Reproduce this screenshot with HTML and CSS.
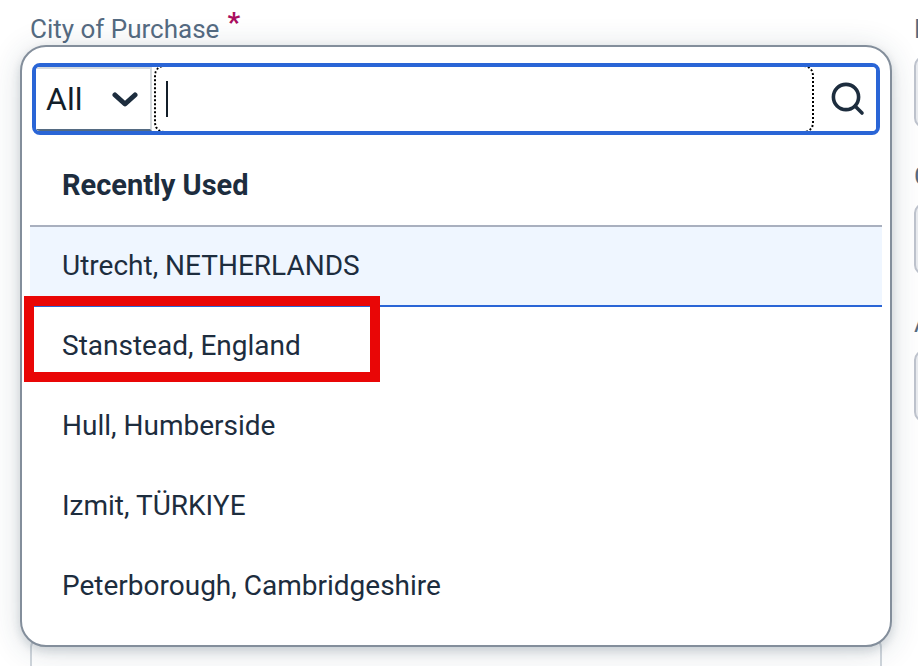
FILE: index.html
```html
<!DOCTYPE html>
<html lang="en">
<head>
  <meta charset="UTF-8">
  <meta name="viewport" content="width=device-width, initial-scale=1">
  <title>City of Purchase</title>
  <link rel="stylesheet" href="styles.css">
</head>

<body>
  <form class="form">
    <div class="main-col">
      <label class="label" for="city">City of Purchase<span class="required">*</span></label>

      <div class="dropdown">
        <div class="search">
          <div class="select-wrap">
            <select class="filter" aria-label="Search in">
              <option>All</option>
            </select>
            <svg class="chevron" viewBox="0 0 26 16" aria-hidden="true">
              <path d="M3 3 L13 12 L23 3"/>
            </svg>
          </div>
          <div class="input-wrap">
            <input type="text" id="city" class="search-input" autocomplete="off">
            <span class="caret"></span>
          </div>
          <button type="button" class="search-btn" aria-label="Search">
            <svg viewBox="0 0 34 34" aria-hidden="true">
              <circle cx="15" cy="15" r="12.6"/>
              <path d="M24.5 24.5 L31 31"/>
            </svg>
          </button>
        </div>

        <h2 class="list-title">Recently Used</h2>
        <ul class="list" role="listbox" aria-label="Recently Used">
          <li class="item selected" role="option" aria-selected="true">Utrecht, NETHERLANDS</li>
          <li class="item marked" role="option">Stanstead, England</li>
          <li class="item" role="option">Hull, Humberside</li>
          <li class="item" role="option">Izmit, TÜRKIYE</li>
          <li class="item" role="option">Peterborough, Cambridgeshire</li>
        </ul>
      </div>

      <textarea class="notes" aria-label="Notes"></textarea>
    </div>

    <div class="side-col">
      <label class="label" for="side1">N</label>
      <input type="text" id="side1" class="side-input" readonly>
      <label class="label" for="side2">C</label>
      <input type="text" id="side2" class="side-input" readonly>
      <label class="label" for="side3">A</label>
      <input type="text" id="side3" class="side-input" readonly>
    </div>
  </form>
</body>
</html>
```
FILE: styles.css
```css
*,
*::after {
  box-sizing: border-box;
}

body {
  margin: 0;
  height: 100vh;
  overflow: hidden;
  background-color: #fff;
  color: #1d2d3e;
  font-family: Roboto, "Liberation Sans", sans-serif;
  font-size: 28px;
}

.form {
  display: grid;
  grid-template-columns: minmax(0, 1fr) 4px;
  gap: 32px;
  padding: 12px 0 0 30px;
}

.label {
  display: block;
  height: 33px;
  line-height: 34px;
  font-size: 26px;
  color: #556b82;
}

.required {
  margin-left: 8px;
  color: #aa0f5f;
  font-weight: bold;
  font-size: 28px;
  line-height: 20px;
  vertical-align: 6px;
}

/* dropdown */
.dropdown {
  position: relative;
  z-index: 2;
  margin: 0 -10px;
  padding: 16px 0 18px;
  border: 2px solid #838e9b;
  border-radius: 26px;
  background-color: #fff;
  box-shadow: 0 4px 10px rgba(34, 53, 72, 0.16), 0 4px 32px rgba(34, 53, 72, 0.16);
}

.search {
  display: flex;
  gap: 2px;
  height: 72px;
  margin: 0 10px;
  border: 4px solid #2a65d6;
  border-radius: 8px;
  overflow: hidden;
}

.select-wrap {
  position: relative;
  width: 116px;
}

.filter {
  appearance: none;
  width: 100%;
  height: 100%;
  padding: 0 10px;
  border: 2px solid #d5dade;
  border-left: 0;
  border-bottom-color: #556b82;
  background-color: #fff;
  color: #131e29;
  font-family: inherit;
  font-size: 32px;
}

.chevron {
  position: absolute;
  top: 25px;
  right: 14px;
  width: 26px;
  height: 16px;
  pointer-events: none;
}

.chevron path,
.search-btn svg {
  fill: none;
  stroke: #1d2d3e;
  stroke-width: 5;
  stroke-linecap: round;
  stroke-linejoin: round;
}

.input-wrap {
  position: relative;
  flex: 1;
  margin: -2px 0;
}

.search-input {
  width: 100%;
  height: 100%;
  padding: 0 10px;
  border: 2px dotted #000;
  border-radius: 10px;
  outline: none;
  background-color: #fff;
  color: #131e29;
  font-family: inherit;
  font-size: 32px;
}

.caret {
  position: absolute;
  top: 16px;
  left: 12px;
  width: 2px;
  height: 36px;
  background-color: #131e29;
}

.search-btn {
  width: 60px;
  padding: 0 0 0 4px;
  border: 0;
  background-color: #fff;
  cursor: pointer;
}

.search-btn svg {
  display: block;
  width: 34px;
  height: 34px;
  margin: 0 auto;
  stroke-width: 3.6;
}

.list-title {
  margin: 0 8px;
  padding: 10px 32px 0;
  height: 92px;
  line-height: 80px;
  border-bottom: 2px solid #a9b0bf;
  font-size: 29px;
  font-weight: bold;
}

.list {
  margin: 0 8px;
  padding: 0;
  list-style: none;
}

.item {
  position: relative;
  height: 80px;
  padding: 0 32px;
  border-bottom: 2px solid transparent;
  line-height: 78px;
  cursor: pointer;
}

.selected {
  border-bottom-color: #2a65d6;
  background-color: #eff6ff;
}

/* red frame around the city to pick */
.marked::after {
  content: "";
  position: absolute;
  top: -11px;
  left: -6px;
  width: 356px;
  height: 86px;
  border: 10px solid #e90606;
}

.notes {
  display: block;
  width: 100%;
  height: 120px;
  margin-top: -8px;
  border: 2px solid #d0d6dc;
  border-radius: 8px;
  background-color: #fff;
  resize: none;
}

/* fields to the right, cut off by the window */
.side-input {
  display: block;
  width: 400px;
  height: 72px;
  margin: 11px 0 31px;
  border: 2px solid #bfc4ce;
  border-radius: 10px;
  background-color: #eaecf0;
}
```
